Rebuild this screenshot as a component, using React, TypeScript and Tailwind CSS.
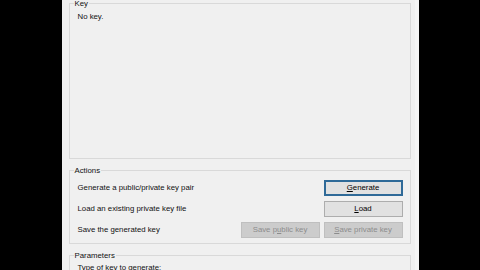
import React from 'react';

const font = { fontFamily: '"Liberation Sans", Arial, sans-serif' };

const Btn = ({ children, disabled, focused }: { children: React.ReactNode; disabled?: boolean; focused?: boolean }) => (
  <button
    disabled={disabled}
    className={`w-[79px] h-[16px] flex items-center justify-center text-[7.8px] leading-none ${
      focused
        ? 'bg-[#e1e1e1] border-2 border-[#2f6a98] text-black'
        : disabled
        ? 'bg-[#cccccc] border border-[#bfbfbf] text-[#8c8c8c]'
        : 'bg-[#e1e1e1] border border-[#adadad] text-black'
    }`}
  >
    {children}
  </button>
);

const Group = ({ label, className, children }: { label: string; className: string; children?: React.ReactNode }) => (
  <fieldset className={`border border-[#d9d9d9] ml-[7px] mr-[4px] shrink-0 ${className}`}>
    <legend className="ml-[4px] px-[1px] text-[7.8px] leading-[9px] text-[#111]">{label}</legend>
    {children}
  </fieldset>
);

export default function App() {
  return (
    <div className="w-[480px] h-[270px] bg-black flex justify-center overflow-hidden" style={font}>
      <div className="w-[357px] h-full bg-[#f0f0f0] flex flex-col overflow-hidden border-r-[4px] border-[#f5f5f5]">
        {/* Key */}
        <Group label="Key" className="-mt-[1.5px] h-[160.5px]">
          <div className="pt-[4px] pl-[8px] text-[7.8px] leading-[9px] text-[#111]">No key.</div>
        </Group>

        {/* Actions */}
        <Group label="Actions" className="mt-[6.5px] h-[78px]">
          <div className="pt-[5px] pl-[8px] pr-[7px] flex flex-col gap-[5px] text-[7.8px] text-[#111]">
            <div className="flex items-center justify-between h-[16px]">
              <span>Generate a public/private key pair</span>
              <Btn focused>
                <u>G</u>enerate
              </Btn>
            </div>
            <div className="flex items-center justify-between h-[16px]">
              <span>Load an existing private key file</span>
              <Btn>
                <u>L</u>oad
              </Btn>
            </div>
            <div className="flex items-center h-[17px]">
              <span className="flex-1">Save the generated key</span>
              <div className="flex gap-[4px]">
                <Btn disabled>
                  Save p<u>u</u>blic key
                </Btn>
                <Btn disabled>
                  <u>S</u>ave private key
                </Btn>
              </div>
            </div>
          </div>
        </Group>

        {/* Parameters */}
        <Group label="Parameters" className="mt-[7px] h-[60px]">
          <div className="pt-[3px] pl-[8px] text-[7.8px] leading-[9px] text-[#111]">Type of key to generate:</div>
        </Group>
      </div>
    </div>
  );
}
